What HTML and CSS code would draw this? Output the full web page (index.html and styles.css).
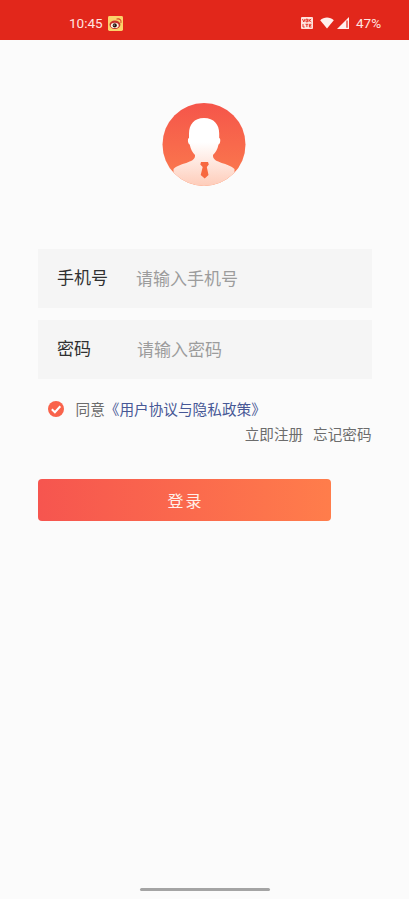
FILE: index.html
```html
<!DOCTYPE html>
<html lang="zh-CN">
<head>
<meta charset="utf-8">
<title>登录</title>
<link rel="stylesheet" href="styles.css">
</head>
<body>
<header class="status">
  <span class="time">10:45</span>
  <svg class="weibo" viewBox="0 0 16 16">
    <rect width="16" height="16" rx="1.5" fill="#fbd36b"/>
    <ellipse cx="7.4" cy="9.4" rx="5.8" ry="4.5" fill="#c8322b"/>
    <ellipse cx="7.2" cy="10" rx="4.2" ry="2.9" fill="#fff4e6"/>
    <circle cx="7.2" cy="10" r="2.2" fill="#29140f"/>
    <circle cx="6.5" cy="9.7" r=".6" fill="#fff"/>
    <path d="M9.5 3.3c3-.9 5 1.2 4.300 3.800" fill="none" stroke="#d9442b" stroke-width="1.1" stroke-linecap="round"/>
  </svg>
  <svg class="volte" viewBox="0 0 12 12">
    <rect width="12" height="12" rx="1" fill="#ffe3dd"/>
    <path d="M1.5 2l1.300 3L4 2M5 2.200h1.600v2.600H5zM8 2v3M8 3.700L10.200 2M8.500 3.500L10.400 5M2 7v3h1.700M4.500 7.300h2.800M5.900 7.300V10M10.500 7.300H8.400V10h2.100M8.400 8.600h1.800" fill="none" stroke="#e2271b" stroke-width=".9"/>
  </svg>
  <svg class="wifi" viewBox="0 0 14 12"><path d="M.2 3.200C4-.4 10-.4 13.800 3.200L7 11.600z" fill="#fff0ed"/></svg>
  <svg class="signal" viewBox="0 0 12 12"><path d="M0 12L12 0v12z" fill="#fff0ed"/><path d="M10 3.600v7.200" stroke="#e2271b" stroke-width="1.2"/></svg>
  <span class="battery">47%</span>
</header>
<main class="login">
  <svg class="avatar" viewBox="0 0 84 84">
    <defs>
      <linearGradient id="disc" x2="0" y2="1"><stop stop-color="#f5554a"/><stop offset="1" stop-color="#fb7d4e"/></linearGradient>
      <linearGradient id="body" x2="0" y2="1"><stop offset=".35" stop-color="#fff"/><stop offset="1" stop-color="#fecbb8"/></linearGradient>
      <clipPath id="round"><circle cx="42" cy="41.500" r="41.5"/></clipPath>
    </defs>
    <circle cx="42" cy="41.500" r="41.5" fill="url(#disc)"/>
    <path clip-path="url(#round)" d="M42 15C32 15 27 21.500 27 30.500V35C25.300 35.500 25.700 40.500 27.700 41.500C28.800 46.500 30.500 49.500 33 52V53C33 60 17 60 11.500 66V84H72.500V66C67 60 51 60 51 53V52C53.500 49.500 55.500 46.500 56.500 41.500C58.500 40.500 58.900 35.500 57.200 35V30.500C57.200 21.500 52 15 42 15Z" fill="url(#body)"/>
    <path d="M39 59H46L46.800 61.500L44.800 64L46.500 72L42.700 75.500L38.700 72L40.700 64L38.300 61.500Z" fill="#f7683f"/>
  </svg>
  <form class="form">
    <label class="field"><span class="name">手机号</span><input class="entry" placeholder="请输入手机号"></label>
    <label class="field"><span class="name">密码</span><input class="entry entry-password" type="password" placeholder="请输入密码"></label>
    <div class="agree">
      <svg class="check" viewBox="0 0 16 16"><circle cx="8" cy="8" r="8" fill="#f9634b"/><path d="M3.800 8.200L6.900 11.200L12.300 5.300" fill="none" stroke="#fff" stroke-width="2"/></svg>
      <span>同意<a class="policy">《用户协议与隐私政策》</a></span>
    </div>
    <nav class="links"><a>立即注册</a><a>忘记密码</a></nav>
    <button class="submit" type="button">登录</button>
  </form>
</main>
<footer class="home"></footer>
</body>
</html>
```
FILE: styles.css
```css
* { box-sizing: border-box; }
body {
  margin: 0;
  height: 899px;
  display: flex;
  flex-direction: column;
  overflow: hidden;
  background: #fbfbfb;
  color: #6c6c6c;
  font-family: "Noto Sans CJK SC", sans-serif;
  font-weight: 400;
}
svg { display: block; flex: none; }
.status {
  height: 40px;
  flex: none;
  display: flex;
  align-items: center;
  padding: 6px 28px 0 69px;
  background: #e2271b;
  color: #ffe5e0;
  font: 400 13.5px/20px Roboto, sans-serif;
}
.time { width: 39px; }
.weibo { width: 15px; height: 15px; }
.volte { width: 12px; height: 12px; margin-left: auto; }
.wifi { width: 14px; height: 12px; margin-left: 7px; }
.signal { width: 12px; height: 12px; margin-left: 3px; }
.battery { width: 25px; margin-left: 7px; white-space: nowrap; }
.login {
  flex: 1;
  display: flex;
  flex-direction: column;
  padding: 63px 37px 0 38px;
}
.avatar { width: 84px; height: 84px; margin: 0 0 62px 124px; }
.form { display: flex; flex-direction: column; }
.field {
  height: 59px;
  display: flex;
  align-items: center;
  margin-bottom: 12px;
  padding: 0 0 3px 19px;
  background: #f5f5f5;
}
.name { width: 79px; color: #303030; font-size: 17px; line-height: 24px; }
.entry {
  width: 200px;
  height: 28px;
  padding: 0;
  border: 0;
  outline: 0;
  background: none;
  color: #333;
  font: inherit;
  font-size: 17px;
}
.entry-password { padding-left: 1px; }
.entry::placeholder { color: #9c9c9c; opacity: 1; }
.agree {
  height: 24px;
  display: flex;
  align-items: center;
  margin-top: 6px;
  padding-left: 9.5px;
  gap: 12px;
  font-size: 14.65px;
  line-height: 24px;
  white-space: nowrap;
}
.check { width: 16px; height: 16px; }
.policy { color: #475896; }
.links {
  display: flex;
  justify-content: flex-end;
  gap: 10px;
  margin: 1px .5px 0 0;
  font-size: 14.6px;
  line-height: 24px;
}
.submit {
  width: 293px;
  height: 42px;
  margin-top: 33px;
  padding: 0 0 0 2px;
  border: 0;
  border-radius: 4px;
  background: linear-gradient(90deg, #f6554f, #ff7d4b);
  color: #fff0e9;
  font: inherit;
  font-size: 16px;
  letter-spacing: 2px;
}
.home {
  width: 130px;
  height: 3px;
  flex: none;
  margin: 0 0 8px 139.500px;
  border-radius: 2px;
  background: #a4a4a4;
}
```
